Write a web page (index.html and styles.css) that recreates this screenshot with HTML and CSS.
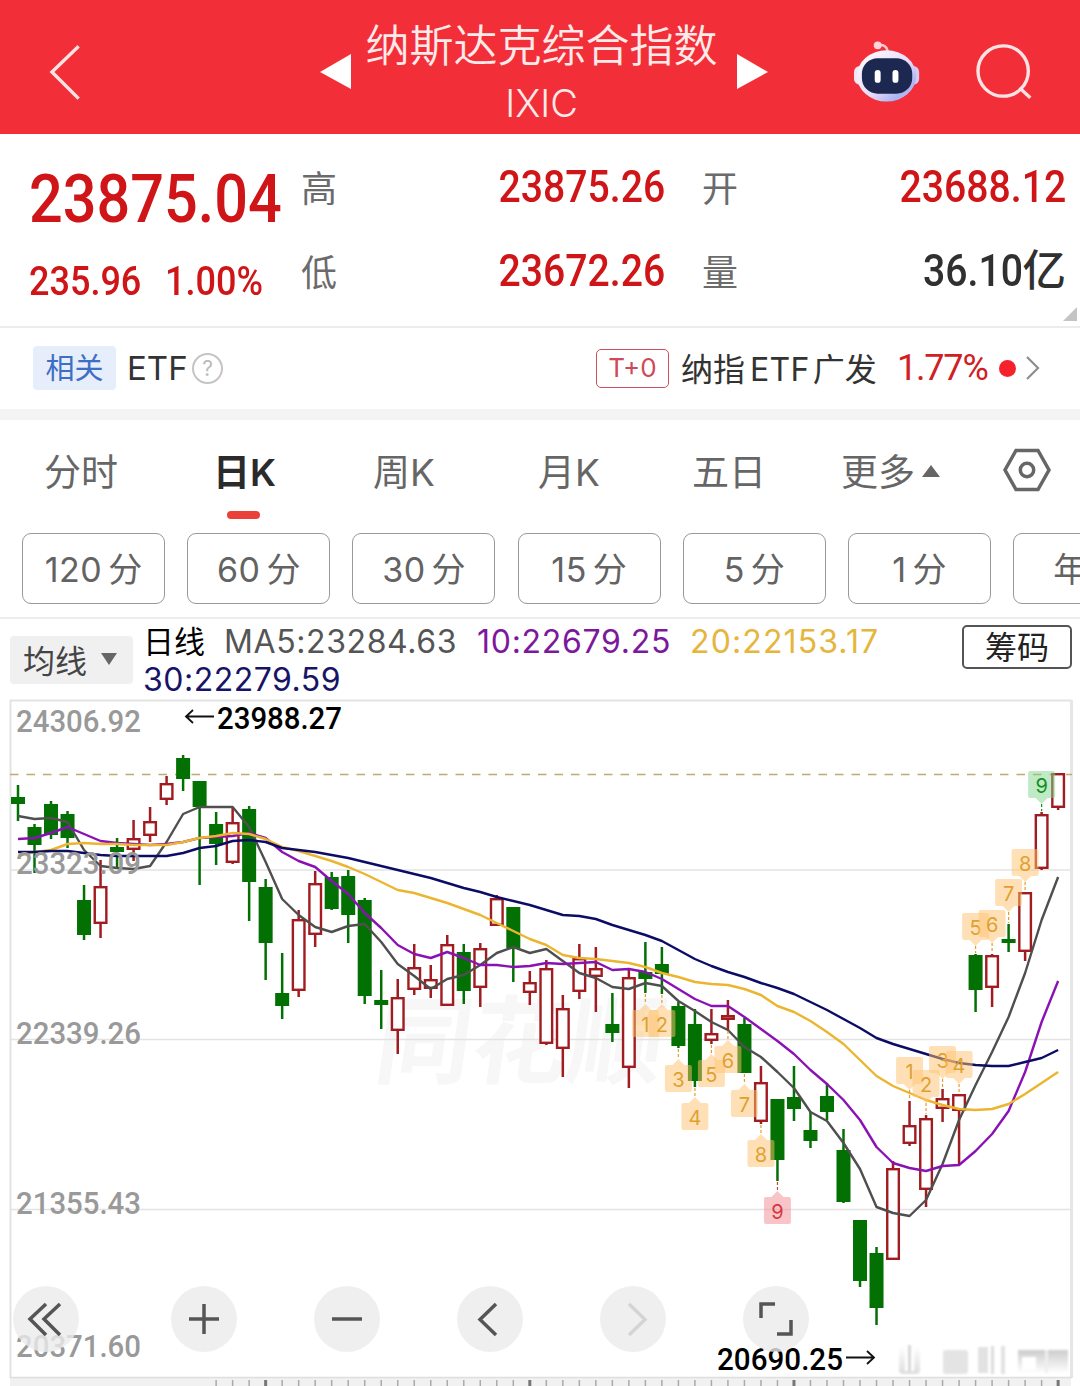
FILE: index.html
```html
<!DOCTYPE html>
<html lang="zh-CN">
<head>
  <meta charset="UTF-8">
  <title>纳斯达克综合指数 IXIC</title>
  <link rel="stylesheet" href="styles.css">
</head>
<body>
  <header class="header">
    <svg class="back" width="32" height="58" viewBox="0 0 32 58"><path d="M30 3L3 29L30 56" /></svg>
    <div class="title-box">
      <svg width="32" height="36" viewBox="0 0 32 36"><path d="M0 18L31 0V35Z" fill="#fff"/></svg>
      <div class="title">
        <h1>纳斯达克综合指数</h1>
        <p>IXIC</p>
      </div>
      <svg width="32" height="36" viewBox="0 0 32 36"><path d="M31 18L0 0V35Z" fill="#fff"/></svg>
    </div>
    <svg class="robot" width="68" height="64" viewBox="0 0 68 64">
      <defs>
        <linearGradient id="shell" x1="0" y1="0" x2="1" y2="1">
          <stop offset="0" stop-color="#fff"/>
          <stop offset=".55" stop-color="#e9dcf8"/>
          <stop offset=".8" stop-color="#a9b4f2"/>
          <stop offset="1" stop-color="#f3c9ea"/>
        </linearGradient>
      </defs>
      <path d="M25 5C31 4 35 6 35 12" fill="none" stroke="#ffc9cf" stroke-width="2.5"/>
      <circle cx="25" cy="5" r="4" fill="#ffd5d9"/>
      <rect x="1" y="26" width="12" height="19" rx="6" fill="#f3e6f5"/>
      <rect x="55" y="26" width="12" height="19" rx="6" fill="#d5c9f5"/>
      <ellipse cx="34" cy="36" rx="30" ry="26" fill="url(#shell)"/>
      <rect x="9" y="18" width="51" height="36" rx="16" fill="#1d2850"/>
      <rect x="22" y="30" width="6" height="13" rx="3" fill="#fff"/>
      <rect x="40" y="30" width="6" height="13" rx="3" fill="#fff"/>
    </svg>
    <svg class="search" width="58" height="58" viewBox="0 0 58 58"><circle cx="27.5" cy="28" r="25.5"/><path d="M44 45L55 55"/></svg>
  </header>

  <section class="quote">
    <div class="price">
      <div class="last"><span class="num">23875.04</span></div>
      <div class="change"><span class="num">235.96</span><span class="num">1.00%</span></div>
    </div>
    <dl class="stats">
      <dt>高</dt><dd><span class="num">23875.26</span></dd>
      <dt class="second">开</dt><dd><span class="num">23688.12</span></dd>
      <dt>低</dt><dd><span class="num">23672.26</span></dd>
      <dt class="second">量</dt><dd class="dark"><span class="num">36.10</span>亿</dd>
    </dl>
    <i class="corner"></i>
  </section>

  <section class="etf">
    <span class="tag">相关</span>
    <span class="etf-label">ETF</span>
    <span class="help">?</span>
    <span class="t0">T+0</span>
    <span class="etf-name">纳指<b>ETF</b>广发</span>
    <span class="etf-rate">1.77%</span>
    <i class="dot"></i>
    <svg width="16" height="26" viewBox="0 0 16 26"><path d="M2 2L13 13L2 24" fill="none" stroke="#8e8e8e" stroke-width="2.2"/></svg>
  </section>

  <nav class="tabs">
    <span>分时</span>
    <span class="active">日K</span>
    <span>周K</span>
    <span>月K</span>
    <span>五日</span>
    <span class="more">更多<i></i></span>
    <svg width="48" height="44" viewBox="0 0 48 44"><path d="M13 2.5H35L46 22L35 41.5H13L2 22Z"/><circle cx="24" cy="22" r="6.7"/></svg>
  </nav>

  <div class="periods">
    <span><b>120</b>分</span>
    <span><b>60</b>分</span>
    <span><b>30</b>分</span>
    <span><b>15</b>分</span>
    <span><b>5</b>分</span>
    <span><b>1</b>分</span>
    <span>年</span>
  </div>

  <section class="ma">
    <div class="ma-select">均线<i></i></div>
    <div class="ma-values">
      <span class="kind">日线</span><span class="ma5">MA5:23284.63</span><span class="ma10">10:22679.25</span><span class="ma20">20:22153.17</span>
      <div class="ma30">30:22279.59</div>
    </div>
    <div class="chips">筹码</div>
  </section>

  <section class="chart">
    <svg id="kline" width="1080" height="687" viewBox="0 699 1080 687"></svg>
    <div class="tools">
      <button><svg viewBox="0 0 66 66"><path d="M33 18L17 33L33 49M47 18L31 33L47 49"/></svg></button>
      <button><svg viewBox="0 0 66 66"><path d="M33 18V48M18 33H48"/></svg></button>
      <button><svg viewBox="0 0 66 66"><path d="M18 33H48"/></svg></button>
      <button><svg viewBox="0 0 66 66"><path d="M39 18L23 33.500L39 49"/></svg></button>
      <button class="off"><svg viewBox="0 0 66 66"><path d="M29 18L45 33.500L29 49"/></svg></button>
      <button><svg viewBox="0 0 66 66"><path d="M18 32V18H32M34 48H48V34"/></svg></button>
    </div>
  </section>
  <script src="chart.js"></script>
</body>
</html>
```
FILE: styles.css
```css
* {
  box-sizing: border-box;
}

body {
  margin: 0;
  width: 1080px;
  height: 1386px;
  overflow: hidden;
  background: #fff;
  color: #333;
  font-family: Inter, "Noto Sans CJK SC", sans-serif;
}

.header {
  display: flex;
  align-items: center;
  height: 134px;
  padding: 10px 47px 0 49px;
  background: #f22f38;
}

.back, .search {
  fill: none;
  stroke: #ffe3e4;
  stroke-width: 3.4;
}

.title-box {
  display: flex;
  align-items: center;
  margin-left: 239px;
}

.title {
  width: 385px;
  padding-right: 5px;
  text-align: center;
  color: #ffeaea;
}

.title h1 {
  margin: 0;
  font-size: 44px;
  line-height: 60px;
  font-weight: 350;
  font-family: "Noto Sans CJK SC", sans-serif;
  white-space: nowrap;
}

.title p {
  margin: 2px 0 0;
  font-size: 38px;
  line-height: 57px;
  font-weight: 350;
}

.robot {
  margin-left: 84px;
}

.search {
  margin-left: 56px;
}

.num {
  display: inline-block;
  font-family: Roboto, sans-serif;
  font-weight: 500;
  transform: scaleX(0.9);
  transform-origin: left center;
}

.quote {
  position: relative;
  display: flex;
  height: 194px;
  padding: 24px 14px 0 29px;
  border-bottom: 2px solid #ececec;
  color: #cf1517;
}

.price {
  width: 272px;
}

.last {
  height: 80px;
  font-size: 66px;
  line-height: 80px;
}

.change {
  display: flex;
  height: 84px;
  font-size: 40px;
  line-height: 88px;
}

.change .num:first-child {
  width: 136px;
}

.stats {
  display: grid;
  grid-template-columns: 62px 302px 99px 302px;
  grid-auto-rows: 84px;
  margin: -14px 0 0;
  font-size: 36px;
  line-height: 84px;
}

.stats dt {
  padding-top: 3px;
  color: #6b6b6b;
}

.stats .second {
  padding-left: 37px;
}

.stats dd {
  margin: 0;
  font-size: 43.500px;
  text-align: right;
}

.stats dd .num {
  transform-origin: right center;
}

.stats .dark {
  color: #303030;
  font-weight: 500;
}

.corner {
  position: absolute;
  right: 3px;
  bottom: 5px;
  border-left: 14px solid transparent;
  border-bottom: 14px solid #c4c4c4;
}

.etf {
  display: flex;
  align-items: center;
  height: 92px;
  padding: 0 39px 1px 33px;
  border-bottom: 11px solid #f4f4f4;
  font-size: 32px;
}

.tag {
  width: 83px;
  height: 44px;
  border-radius: 4px;
  background: #e6edfb;
  color: #3d6fc4;
  font-size: 29px;
  line-height: 45px;
  text-align: center;
}

.etf-label {
  width: 65px;
  margin-left: 11px;
  font-size: 33px;
}

.help {
  width: 31px;
  height: 31px;
  border: 2px solid #c4c4c4;
  border-radius: 50%;
  color: #bbb;
  font-size: 21px;
  line-height: 27px;
  text-align: center;
}

.t0 {
  width: 73px;
  height: 39px;
  margin-left: auto;
  border: 1.500px solid #c9525c;
  border-radius: 5px;
  color: #cf4a56;
  font-size: 26px;
  line-height: 36px;
  text-align: center;
}

.etf-name {
  width: 216px;
  margin: -3px 0 0 12px;
  white-space: nowrap;
}

.etf-name b {
  margin: 0 3px 0 5px;
  font-weight: 400;
  letter-spacing: 0.3px;
}

.etf-rate {
  width: 91px;
  font-family: Roboto, sans-serif;
  font-size: 36px;
  letter-spacing: -1.200px;
  color: #cf2023;
}

.dot {
  width: 17px;
  height: 17px;
  margin: 0 9px 0 11px;
  border-radius: 50%;
  background: #f5222d;
}

.tabs {
  display: grid;
  grid-template-columns: 169px 160px 165px 154px 149px 162px 48px;
  align-items: center;
  height: 113px;
  padding: 0 0 14px 44px;
  color: #666;
  font-size: 37px;
}

.tabs .active {
  position: relative;
  color: #2b2b2b;
  font-weight: 600;
}

.tabs .active::after {
  content: "";
  position: absolute;
  left: 14px;
  bottom: -22px;
  width: 33px;
  height: 8px;
  border-radius: 4px;
  background: #ea4038;
}

.more i {
  display: inline-block;
  margin-left: 7px;
  border: 9px solid transparent;
  border-top: 0;
  border-bottom: 12px solid #666;
  vertical-align: 9px;
}

.tabs svg {
  fill: none;
  stroke: #666;
  stroke-width: 3.500;
}

.periods {
  display: flex;
  gap: 22.200px;
  height: 86px;
  padding-left: 22px;
  overflow: hidden;
  border-bottom: 2px solid #ececec;
}

.periods span {
  flex: none;
  width: 143px;
  height: 71px;
  border: 1.500px solid #999;
  border-radius: 9px;
  color: #636363;
  font-size: 34px;
  line-height: 71px;
  text-align: center;
}

.periods span:last-child {
  padding-left: 39px;
  text-align: left;
}

.periods b {
  margin-right: 6px;
  font-weight: 400;
  letter-spacing: 0.500px;
}

.ma {
  display: flex;
  height: 80px;
  padding: 0 8px 0 10px;
}

.ma-select {
  display: flex;
  align-items: center;
  gap: 14px;
  width: 123px;
  height: 48px;
  margin-top: 17px;
  padding: 0 0 2px 13px;
  border-radius: 4px;
  background: #f0f0f0;
  color: #444;
  font-size: 32px;
}

.ma-select i {
  border: 8.500px solid transparent;
  border-top: 12px solid #666;
  border-bottom: 0;
}

.ma-values {
  flex: 1;
  margin-left: 10px;
  font-size: 32px;
  line-height: 38px;
  padding-top: 4px;
  letter-spacing: 0.600px;
  white-space: nowrap;
}

.kind {
  margin-right: 19px;
  color: #000;
  font-size: 31px;
  letter-spacing: 0;
}

.ma5 { margin-right: 20px; color: #555; }
.ma10 { margin-right: 19px; color: #7c189c; letter-spacing: 0.700px; }
.ma20 { color: #e6b53c; letter-spacing: 1.100px; }
.ma30 { color: #171467; letter-spacing: 0.500px; }

.chips {
  width: 110px;
  height: 44px;
  margin-top: 6px;
  border: 2px solid #555;
  border-radius: 5px;
  color: #222;
  font-size: 32px;
  line-height: 41px;
  text-align: center;
}

.chart {
  position: relative;
  height: 687px;
}

.chart svg {
  display: block;
}

.axis {
  font: 500 32px Roboto, sans-serif;
  fill: #999;
}

.extreme {
  font: 500 32px Roboto, sans-serif;
  fill: #000;
}

.mark {
  font: 400 20px Inter, sans-serif;
  text-anchor: middle;
}

.watermark {
  font: 700 96px "Noto Sans CJK SC", sans-serif;
  fill: #f7f7f7;
}

.tools {
  position: absolute;
  left: 13px;
  top: 587px;
  display: flex;
  gap: 77px;
}

.tools button {
  width: 66px;
  height: 66px;
  padding: 0;
  border: 0;
  border-radius: 50%;
  background: rgba(235, 235, 235, 0.8);
}

.tools button:first-child {
  margin-right: 15px;
}

.tools path {
  fill: none;
  stroke: #555;
  stroke-width: 3.500;
}

.tools .off path {
  stroke: #d4d4d4;
}
```
FILE: chart.js
```js
const svg = document.getElementById('kline');
const STEP = 16.51;
const X0 = 18;
const GREEN = '#037003';
const RED = '#a01c20';

// [up?, high, body top, body bottom, low]
const candles = [
  [0,785,797,804,821],[0,824,827,845,873],[0,801,804,835,839],[0,811,814,838,848],
  [0,885,900,935,940],[1,860,886,924,938],[0,838,847,852,868],[1,820,838,850,861],
  [1,807,821,836,842],[1,776,783,800,805],[0,755,758,779,791],[0,781,781,807,885],
  [0,812,824,844,865],[1,808,822,863,864],[0,806,809,882,921],[0,879,887,943,980],
  [0,953,993,1006,1019],[1,910,919,991,997],[1,871,883,935,947],[0,872,877,909,910],
  [0,870,876,915,943],[0,898,900,996,1004],[0,970,1000,1005,1029],[1,979,997,1031,1054],
  [1,944,967,990,995],[1,965,979,989,998],[1,935,944,1006,1006],[0,944,952,991,1004],
  [1,943,948,988,1007],[1,895,898,926,926],[0,907,907,948,982],[1,971,982,993,1005],
  [1,960,968,1044,1045],[1,995,1008,1049,1077],[1,944,958,992,999],[1,947,968,977,1012],
  [0,993,1024,1033,1042],[1,969,977,1068,1088],[0,942,972,979,993],[0,947,964,974,994],
  [0,1002,1006,1046,1048],[0,1009,1024,1081,1087],[1,1009,1033,1041,1044],[1,1000,1015,1020,1030],
  [0,1018,1024,1073,1073],[1,1066,1082,1122,1124],[0,1099,1099,1160,1181],[0,1066,1097,1109,1121],
  [0,1112,1130,1141,1148],[0,1083,1096,1112,1120],[0,1129,1150,1202,1203],[0,1220,1220,1281,1287],
  [0,1247,1253,1308,1325],[1,1161,1168,1260,1260],[1,1101,1125,1144,1146],[1,1115,1118,1190,1207],
  [1,1089,1098,1109,1122],[1,1094,1094,1111,1165],[0,954,955,990,1012],[1,954,955,988,1007],
  [0,924,939,943,952],[1,892,892,952,961],[1,812,814,869,870],[1,773,773,808,810]
];

const averages = [
  ['#4f4f4f', [816,819,818,822,850,866,868,869,866,842,814,807,807,807,827,862,899,915,927,932,926,924,942,964,976,989,979,975,965,953,947,953,949,961,973,978,987,989,983,986,1001,1011,1022,1030,1047,1057,1072,1088,1112,1121,1143,1169,1207,1213,1216,1200,1164,1120,1085,1052,1017,973,920,877]],
  ['#8a12b4', [839,838,833,827,834,841,843,844,845,844,842,838,837,836,833,838,852,861,867,881,894,913,928,945,954,958,952,958,965,965,967,966,963,964,963,962,970,969,972,979,989,999,1006,1006,1017,1029,1041,1054,1070,1084,1100,1120,1147,1163,1168,1171,1166,1165,1151,1134,1111,1072,1022,981]],
  ['#ecb52f', [856,852,850,844,843,844,844,845,845,845,842,838,836,833,834,839,847,851,856,861,867,874,882,890,893,898,903,909,915,923,931,939,945,955,958,959,961,963,967,973,977,982,984,985,989,995,1006,1012,1021,1032,1044,1060,1076,1086,1093,1100,1105,1109,1110,1109,1104,1094,1083,1072]],
  ['#0c0c66', [852,852,851,851,853,855,856,856,856,856,853,848,846,841,840,842,848,850,852,855,858,862,866,870,874,878,883,888,892,897,901,905,910,915,916,919,925,930,935,941,950,959,966,972,977,983,988,994,1002,1010,1019,1028,1038,1044,1049,1054,1059,1063,1065,1066,1066,1062,1058,1050]]
];

// [candle index, digit, box top, pointer side]
const marks = [
  [38,1,1010,'up'],[39,2,1010,'up'],[40,3,1065,'up'],[41,4,1103,'up'],[42,5,1060,'up'],
  [43,6,1046,'up'],[44,7,1090,'up'],[45,8,1140,'up'],[46,9,1197,'up'],
  [54,1,1057,'down'],[55,2,1070,'down'],[56,3,1046,'down'],[57,4,1051,'down'],
  [58,5,913,'down'],[59,6,910,'down'],[60,7,879,'down'],[61,8,849,'down'],[62,9,771,'down']
];

let out = '';

function x(i) {
  return X0 + STEP * i;
}

function line(x1, y1, x2, y2, color, width, extra = '') {
  out += `<line x1="${x1}" y1="${y1}" x2="${x2}" y2="${y2}" stroke="${color}" stroke-width="${width}" ${extra}/>`;
}

function label(cls, tx, y, text, width) {
  out += `<text class="${cls}" x="${tx}" y="${y}" textLength="${width}" lengthAdjust="spacingAndGlyphs">${text}</text>`;
}

// logo behind the plot
out += '<text class="watermark" transform="translate(372 1076) skewX(-8)">同花顺</text>';

// frame and grid
line(10, 700.5, 1072, 700.5, '#e3e3e3', 2);
line(10.5, 700, 10.5, 1378, '#e3e3e3', 2);
line(1071.5, 700, 1071.5, 1378, '#e6e6e6', 3);
[870, 1039.5, 1209.5].forEach(y => line(10, y, 1071, y, '#e3e3e3', 1.5));
line(10, 774.5, 1072, 774.5, '#bfa974', 1.3, 'stroke-dasharray="8.5 8"');

// bottom ruler
out += '<rect x="10" y="1378" width="1061" height="8" fill="#f1f1f1"/>';
line(10, 1377.5, 1072, 1377.5, '#dedede', 1.5);
for (let i = 12; i < 64; i++) {
  const bold = i % 16 === 15;
  line(x(i), 1380, x(i), 1386, bold ? '#777' : '#aaa', bold ? 3 : 1.5);
}

candles.forEach(([up, high, top, bottom, low], i) => {
  const color = up ? RED : GREEN;
  const cx = x(i);
  if (up) {
    line(cx, high, cx, top + 1, color, 2.5);
    line(cx, bottom - 1, cx, low, color, 2.5);
    out += `<rect x="${cx - 5.8}" y="${top + 1.2}" width="11.6" height="${bottom - top - 2.4}" fill="#fff" stroke="${color}" stroke-width="2.4"/>`;
  } else {
    line(cx, high, cx, low, color, 2.5);
    out += `<rect x="${cx - 7}" y="${top}" width="14" height="${bottom - top}" fill="${color}"/>`;
  }
});

averages.forEach(([color, ys]) => {
  const points = ys.map((y, i) => `${x(i)},${y}`).join(' ');
  out += `<polyline points="${points}" fill="none" stroke="${color}" stroke-width="2.4" stroke-linejoin="round"/>`;
});

marks.forEach(([i, digit, top, side]) => {
  const cx = x(i);
  let box = '#ffc36f', text = '#e0a030';
  if (digit === 9) {
    box = side === 'up' ? '#f58b93' : '#80d68c';
    text = side === 'up' ? '#d4383e' : '#138f20';
  }
  const tip = side === 'up'
    ? `M${cx - 6} ${top}L${cx} ${top - 6}L${cx + 6} ${top}Z`
    : `M${cx - 6} ${top + 27}L${cx} ${top + 33}L${cx + 6} ${top + 27}Z`;
  if (side === 'up') {
    line(cx, candles[i][4] + 1, cx, top - 6, text, 1.2, 'stroke-dasharray="3 2"');
  } else {
    line(cx, top + 33, cx, candles[i][1] - 1, text, 1.2, 'stroke-dasharray="3 2"');
  }
  out += `<g fill="${box}" opacity=".5"><rect x="${cx - 13.5}" y="${top}" width="27" height="27" rx="2"/><path d="${tip}"/></g>`;
  out += `<text class="mark" x="${cx}" y="${top + 22}" fill="${text}">${digit}</text>`;
});

// price scale
[['24306.92', 732], ['23323.09', 874], ['22339.26', 1044], ['21355.43', 1214], ['20371.60', 1357]]
  .forEach(([text, y]) => label('axis', 16, y, text, 125));

// highest and lowest price
label('extreme', 217, 729, '23988.27', 125);
label('extreme', 717, 1370, '20690.25', 126);
out += '<path d="M214 716.500H186M193 710L186 716.500L193 723M846 1357.500H874M867 1351L874 1357.500L867 1364" fill="none" stroke="#111" stroke-width="1.8"/>';

// faded stamp in the corner
out += `<defs>
  <linearGradient id="fade" x1="0" y1="0" x2="0" y2="1"><stop offset="0" stop-color="#fff"/><stop offset="1" stop-color="#ddd"/></linearGradient>
  <linearGradient id="fadeDark" x1="0" y1="1" x2="0" y2="0"><stop offset="0" stop-color="#fff"/><stop offset="1" stop-color="#ccc"/></linearGradient>
  <filter id="soft"><feGaussianBlur stdDeviation="1.3"/></filter>
</defs>
<g filter="url(#soft)">
  <rect x="899" y="1346" width="21" height="28" rx="4" fill="url(#fade)"/>
  <rect x="905" y="1346" width="9" height="25" fill="#fff"/>
  <rect x="908" y="1345" width="3" height="26" fill="#d5d5d5"/>
  <rect x="943" y="1350" width="25" height="24" rx="3" fill="#e4e4e4"/>
  <rect x="978" y="1347" width="10" height="26" fill="#e2e2e2"/>
  <rect x="991" y="1346" width="3" height="28" fill="#dcdcdc"/>
  <rect x="1001" y="1346" width="4" height="28" fill="#e2e2e2"/>
  <rect x="1018" y="1350" width="50" height="23" fill="url(#fadeDark)"/>
  <rect x="1022" y="1357" width="14" height="13" fill="#fff"/>
  <rect x="1045" y="1350" width="3" height="23" fill="#eee"/>
</g>`;

svg.innerHTML = out;
```
